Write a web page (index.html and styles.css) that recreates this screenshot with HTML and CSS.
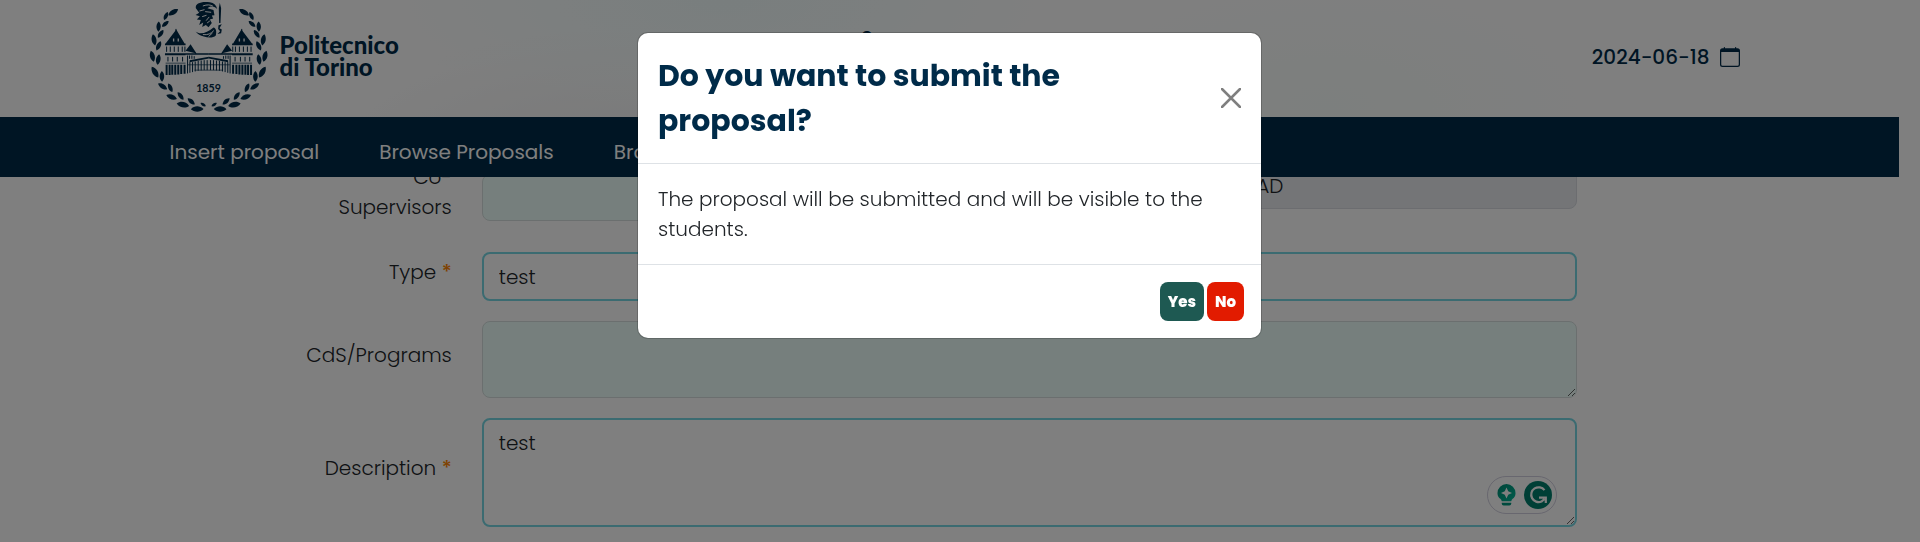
FILE: index.html
```html
<!DOCTYPE html>
<html lang="en">
<head>
<meta charset="utf-8">
<title>Insert proposal</title>
<link rel="stylesheet" href="styles.css">
</head>
<body>
<div class="page">
  <header class="site-header">
    <div class="banner container">
      <a class="brand" href="#" aria-label="Politecnico di Torino">
        <svg class="brand-seal" viewBox="50 0 364 340" aria-hidden="true">
          <defs>
            <path id="leaf" d="M-19 1C-9-11 8-11 19-1C9 11-9 10-19 1Z"/>
            <g id="branch">
              <use href="#leaf" transform="translate(126 34) rotate(-28) scale(.9)"/>
              <use href="#leaf" transform="translate(104 45) rotate(-62) scale(.7)"/>
              <use href="#leaf" transform="translate(102 69) rotate(-38) scale(.7)"/>
              <use href="#leaf" transform="translate(82 77) rotate(-85) scale(.8)"/>
              <use href="#leaf" transform="translate(88 99) rotate(-52) scale(.75)"/>
              <use href="#leaf" transform="translate(68 117) rotate(82) scale(.9)"/>
              <use href="#leaf" transform="translate(82 135) rotate(-62) scale(.8)"/>
              <use href="#leaf" transform="translate(63 166) rotate(78) scale(.9)"/>
              <use href="#leaf" transform="translate(81 176) rotate(-78) scale(.85)"/>
              <use href="#leaf" transform="translate(71 214) rotate(62)"/>
              <use href="#leaf" transform="translate(92 227) rotate(-88) scale(.85)"/>
              <use href="#leaf" transform="translate(94 257) rotate(36) scale(.85)"/>
              <use href="#leaf" transform="translate(117 261) rotate(68) scale(.75)"/>
              <use href="#leaf" transform="translate(121 289) rotate(24) scale(.9)"/>
              <use href="#leaf" transform="translate(148 286) rotate(55) scale(.75)"/>
              <use href="#leaf" transform="translate(155 312) rotate(14)"/>
              <use href="#leaf" transform="translate(180 302) rotate(45) scale(.75)"/>
              <use href="#leaf" transform="translate(198 325) rotate(2)"/>
              <use href="#leaf" transform="translate(216 312) rotate(35) scale(.5)"/>
            </g>
            <g id="wing">
              <path d="M103 128L135 86L160 128ZM101 128h62v5h-62zM101 157h62v6h-62zM163 150L178 130L196 158ZM163 157h70v5h-70zM175 178L233 168v5L175 184Z"/>
              <path d="M134 84v8M106 137v16M117 137v16M129 137v16M141 137v16M153 137v16M161 137v16M110 168v14M124 168v14M138 168v14M154 168v14" stroke-width="3" stroke="currentColor"/>
              <path d="M106 192v31M115 192v31M123 192v30M132 192v30M141 192v29M150 192v28M160 192v27" stroke-width="6" stroke="currentColor"/>
              <path d="M169 164v54M175 164v10M182 164v10M189 166v8M176 184v32M184 184v30M192 182v30M201 180v30M210 179v30M219 178v30M228 178v30" stroke-width="3" stroke="currentColor"/>
              <path d="M103 187h60M170 192h63M190 208h43" stroke-width="2" stroke="currentColor"/>
              <path d="M125 113h4v9h-4zM139 113h4v9h-4z" class="seal-gap"/>
            </g>
          </defs>
          <g fill="currentColor">
            <use href="#branch"/>
            <use href="#branch" transform="translate(465 0) scale(-1 1)"/>
            <use href="#wing"/>
            <use href="#wing" transform="translate(466 0) scale(-1 1)"/>
            <path d="M194 22C190 6 214 0 236 4C249 6 256 13 258 24C247 14 236 15 229 22L247 27L250 43L242 44L246 53L236 56L242 66L232 79L224 72L213 78L216 65L204 72L209 57L197 56L206 46L193 42L204 35Z"/>
            <path d="M215 15C228 10 238 11 246 16M205 30L220 26M213 47L226 43M225 59L234 48M222 32L240 34M228 66L236 60" class="seal-cut"/>
            <path d="M193 92C206 102 226 98 247 80C255 82 257 92 254 104C246 112 230 111 218 107C208 105 199 100 193 92Z"/>
            <path d="M215 101C230 103 240 98 248 89M232 107L244 96" class="seal-cut"/>
            <path d="M266 5L270 22L268 66L264 66L263 22ZM262 73L272 70L265 82L272 86L270 97L259 99L267 91L261 84Z"/>
          </g>
          <text x="232" y="273" text-anchor="middle" class="seal-year">1859</text>
        </svg>
        <span class="brand-name">Politecnico<br>di Torino</span>
      </a>
      <h1 class="site-title">Thesis proposals</h1>
      <div class="date">
        <time datetime="2024-06-18">2024-06-18</time>
        <svg class="date-icon" viewBox="0 0 16 16" fill="currentColor" aria-hidden="true"><path d="M3.5 0a.5.5 0 0 1 .5.5V1h8V.5a.5.5 0 0 1 1 0V1h1a2 2 0 0 1 2 2v11a2 2 0 0 1-2 2H2a2 2 0 0 1-2-2V3a2 2 0 0 1 2-2h1V.5a.5.5 0 0 1 .5-.5M1 4v10a1 1 0 0 0 1 1h12a1 1 0 0 0 1-1V4z"/></svg>
      </div>
    </div>
    <nav class="navbar">
      <div class="nav-links container">
        <a href="#">Insert proposal</a>
        <a href="#">Browse Proposals</a>
        <a href="#">Browse Applications</a>
      </div>
    </nav>
  </header>

  <main class="container">
    <form class="proposal-form">
      <label for="cosup">Co-<br>Supervisors</label>
      <div class="split">
        <input id="cosup" class="field muted" type="text">
        <input class="field locked" type="text" value="AD" disabled aria-label="Group">
      </div>
      <label for="type">Type <span class="required">*</span></label>
      <input id="type" class="field" type="text" value="test">
      <label for="cds">CdS/Programs</label>
      <textarea id="cds" class="field muted" rows="2"></textarea>
      <label for="description">Description <span class="required">*</span></label>
      <div class="editor">
        <textarea id="description" class="field" rows="3">test</textarea>
        <div class="assistant">
          <svg class="bulb" viewBox="0 0 20 24" aria-hidden="true">
            <defs><linearGradient id="bulb-fill" x1="0" y1="0" x2="1" y2="1"><stop offset="0" stop-color="#008a72"/><stop offset="1" stop-color="#00b898"/></linearGradient></defs>
            <path fill="url(#bulb-fill)" d="M10 0a9.500 9.500 0 0 1 9.500 9.500c0 3-1.500 4.600-3 6-.8.8-1.200 1.500-1.500 2.500H5c-.3-1-.7-1.700-1.500-2.500-1.500-1.400-3-3-3-6A9.500 9.500 0 0 1 10 0Z"/>
            <path fill="#fff" d="M10 3.500l1.800 4 4 1.800-4 1.800-1.800 4-1.800-4-4-1.800 4-1.800Z"/>
            <path fill="#00957c" d="M5 19.500h10v1a2 2 0 0 1-2 2H7a2 2 0 0 1-2-2Z"/>
          </svg>
          <svg class="grammar" viewBox="0 0 28 28" aria-hidden="true">
            <circle cx="14" cy="14" r="14" fill="#007f6d"/>
            <path d="M20.500 9.200A7.400 7.400 0 1 0 17.500 20.500L20.500 18M15 16.600h6.800V22" fill="none" stroke="#fff" stroke-width="2.200"/>
          </svg>
        </div>
      </div>
    </form>
  </main>
</div>

<div class="backdrop">
  <div class="modal" role="dialog" aria-modal="true" aria-labelledby="modal-title">
    <div class="modal-header">
      <h2 id="modal-title">Do you want to submit the proposal?</h2>
      <button class="close" type="button" aria-label="Close">
        <svg viewBox="0 0 20 20" aria-hidden="true"><path d="M1 1L19 19M19 1L1 19" fill="none" stroke="#7f7f7f" stroke-width="2.500" stroke-linecap="round"/></svg>
      </button>
    </div>
    <div class="modal-body">The proposal will be submitted and will be visible to the students.</div>
    <div class="modal-footer">
      <button class="btn yes" type="button">Yes</button>
      <button class="btn no" type="button">No</button>
    </div>
  </div>
</div>
</body>
</html>
```

FILE: styles.css
```css
* {
  box-sizing: border-box;
}

html {
  overflow: hidden;
}

body {
  margin: 0;
  background: #fff;
  color: #212529;
  font-family: Poppins, Inter, "Open Sans", sans-serif;
  font-size: 20px;
  font-weight: 300;
  line-height: 30px;
}

.page {
  margin-right: 21px;
}

.container {
  max-width: 1650px;
  margin: 0 auto;
}

.site-header {
  position: relative;
  z-index: 2;
  background:
    radial-gradient(ellipse 340px 120px at 38% 0, #f2fdfd, transparent),
    radial-gradient(ellipse 300px 140px at 70% 60%, #f9fefc, transparent),
    radial-gradient(ellipse 340px 150px at 34% 100%, #f0f1f2, transparent),
    #fff;
}

.banner {
  display: flex;
  align-items: center;
  justify-content: space-between;
  height: 117px;
  padding: 0 35px 3px 23px;
}

.brand {
  display: flex;
  align-items: center;
  gap: 11px;
  color: #002b49;
  text-decoration: none;
}

.brand-seal {
  width: 121px;
  height: 113px;
}

.brand-name {
  padding-bottom: 3px;
  font-family: Lato, sans-serif;
  font-size: 24px;
  font-weight: 900;
  line-height: 22px;
}

.seal-gap {
  fill: #fff;
}

.seal-cut {
  fill: none;
  stroke: #fff;
  stroke-width: 3;
}

.seal-year {
  fill: #002b49;
  font-family: Lato, sans-serif;
  font-size: 32px;
  font-weight: 700;
}

.site-title {
  margin: 0;
  padding: 0 90px 8px 0;
  color: #002b49;
  font-size: 48px;
  font-weight: 700;
  line-height: 48px;
}

.date {
  display: flex;
  align-items: center;
  gap: 10px;
  color: #002b49;
  font-weight: 500;
}

.date-icon {
  width: 20px;
  height: 20px;
}

.navbar {
  background: #002b49;
}

.nav-links {
  display: flex;
  gap: 60px;
  padding: 20px 45px 10px;
}

.nav-links a {
  color: #fff;
  font-weight: 400;
  text-decoration: none;
}

.proposal-form {
  display: grid;
  grid-template-columns: 29fr 97fr;
  gap: 20px 30px;
  align-items: center;
  margin-top: -15px;
  padding: 0 198px 20px 0;
}

.proposal-form label {
  margin-bottom: 10px;
  text-align: right;
}

.required {
  color: #ff8500;
  font-weight: 500;
}

.split {
  display: grid;
  grid-template-columns: 13fr 6fr;
  align-self: stretch;
  align-items: start;
  gap: 30px;
}

.field {
  display: block;
  width: 100%;
  margin: 0;
  padding: 8px 15px 7px;
  border: 2px solid #76d6e2;
  border-radius: 8px;
  background: #fff;
  color: #212529;
  font: inherit;
}

.muted {
  border: 1px solid #d6dfde;
  background: #ecfffb;
}

.split .muted {
  margin-top: 12px;
}

.locked {
  border: 1px solid #d8dbe0;
  background: #e9ebef;
}

.editor {
  position: relative;
}

.assistant {
  position: absolute;
  right: 20px;
  bottom: 13px;
  display: flex;
  align-items: center;
  gap: 8px;
  padding: 4px 4px 4px 9px;
  border: 1px solid #d0cede;
  border-radius: 20px;
  background: #fff;
}

.bulb {
  width: 19px;
  height: 23px;
}

.grammar {
  width: 28px;
  height: 28px;
}

.backdrop {
  position: fixed;
  inset: 0;
  z-index: 10;
  padding: 33px 21px 0 0;
  background: rgba(0, 0, 0, 0.5);
}

.modal {
  max-width: 623px;
  margin: 0 auto;
  border-radius: 10px;
  background: #fff;
  box-shadow: 0 0 0 1px rgba(0, 0, 0, 0.18);
}

.modal-header {
  display: flex;
  align-items: center;
  justify-content: space-between;
  gap: 100px;
  padding: 20px;
  border-bottom: 1px solid #dee2e6;
}

.modal-header h2 {
  margin: 0;
  color: #002b49;
  font-size: 30px;
  font-weight: 700;
  line-height: 45px;
}

.close {
  flex: none;
  width: 20px;
  height: 20px;
  padding: 0;
  border: 0;
  background: none;
}

.close svg {
  display: block;
}

.modal-body {
  padding: 20px;
}

.modal-footer {
  display: flex;
  justify-content: flex-end;
  gap: 3px;
  padding: 17px;
  border-top: 1px solid #dee2e6;
}

.btn {
  padding: 8px;
  border: 0;
  border-radius: 8px;
  color: #fff;
  font: inherit;
  font-size: 15px;
  font-weight: 800;
  line-height: 23px;
}

.yes {
  background: #1e5952;
}

.no {
  background: #e21b00;
}
```
